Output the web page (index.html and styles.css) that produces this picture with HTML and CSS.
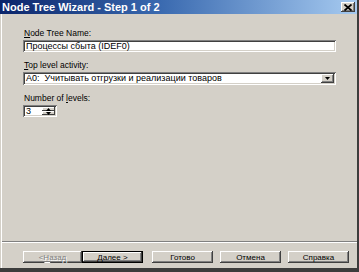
FILE: index.html
```html
<!DOCTYPE html>
<html>
<head>
<meta charset="utf-8">
<link rel="stylesheet" href="styles.css">
</head>
<body>
<div class="window">
  <div class="titlebar">
    <span class="title">Node Tree Wizard - Step 1 of 2</span>
    <span class="close"><svg width="8" height="7" viewBox="0 0 8 7"><path d="M0.5 0.5 L7.5 6.5 M7.5 0.5 L0.5 6.5" stroke="#000" stroke-width="1.8" fill="none"/></svg></span>
  </div>
  <div class="frame">
    <div class="content">
      <div class="form">
        <label class="label label-first"><u>N</u>ode Tree Name:</label>
        <div class="field input">Процессы сбыта (IDEF0)</div>
        <label class="label"><u>T</u>op level activity:</label>
        <div class="field select">
          <span class="select-text">A0:&nbsp; Учитывать отгрузки и реализации товаров</span>
          <span class="dropbtn"><svg width="5" height="3" viewBox="0 0 5 3"><path d="M0 0 H5 L2.5 3 Z" fill="#000"/></svg></span>
        </div>
        <label class="label">Number of <u>l</u>evels:</label>
        <div class="field spin">
          <span class="spin-text">3</span>
          <span class="spin-btns">
            <span class="spin-btn"><svg width="5" height="3" viewBox="0 0 5 3"><path d="M0 3 H5 L2.5 0 Z" fill="#000"/></svg></span>
            <span class="spin-btn"><svg width="5" height="3" viewBox="0 0 5 3"><path d="M0 0 H5 L2.5 3 Z" fill="#000"/></svg></span>
          </span>
        </div>
      </div>
      <div class="separator"></div>
      <div class="buttons">
        <div class="btn-pair">
          <span class="btn btn-back disabled">&lt; <u>Н</u>азад</span>
          <span class="btn btn-next default"><u>Д</u>алее &gt;</span>
        </div>
        <span class="btn">Готово</span>
        <span class="btn">Отмена</span>
        <span class="btn">Справка</span>
      </div>
    </div>
  </div>
</div>
</body>
</html>
```

FILE: styles.css
```css
html, body {
  margin: 0;
  padding: 0;
  background: #3c3c3c;
}
body {
  width: 359px;
  height: 272px;
  overflow: hidden;
  font-family: "Liberation Sans", Arial, sans-serif;
  font-size: 8.5px;
  color: #000;
}
.window {
  width: 357px;
  height: 268px;
  display: flex;
  flex-direction: column;
  background: #d4d0c8;
}
.titlebar {
  height: 14px;
  flex: none;
  display: flex;
  align-items: center;
  justify-content: space-between;
  background: linear-gradient(to right, #0a246a 0%, #3a6ab0 45%, #a6caf0 100%);
  padding: 0 2px 0 2px;
}
.title {
  color: #fff;
  font-weight: bold;
  font-size: 11px;
  line-height: 14px;
  white-space: nowrap;
}
.close {
  width: 14px;
  height: 10px;
  background: #d4d0c8;
  box-shadow: inset -1px -1px #404040, inset 1px 1px #fff, inset -2px -2px #808080;
  display: flex;
  align-items: center;
  justify-content: center;
}
.close svg { display: block; }
.frame {
  flex: 1;
  display: flex;
  box-shadow: inset 1px 0 #d4d0c8, inset 2px 0 #fff;
}
.content {
  flex: 1;
  display: flex;
  flex-direction: column;
}
.form {
  flex: 1;
  display: flex;
  flex-direction: column;
  align-items: flex-start;
  padding-left: 23px;
  padding-top: 14px;
}
.label {
  display: block;
  line-height: 10px;
  height: 10px;
  margin-top: 8px;
  margin-bottom: 2px;
  margin-left: 1px;
  white-space: nowrap;
}
.label-first {
  margin-top: 0;
}
.field {
  background: #fff;
  box-shadow: inset 1px 1px #808080, inset -1px -1px #fff, inset 2px 2px #404040, inset -2px -2px #d4d0c8;
  box-sizing: border-box;
  white-space: nowrap;
  font-size: 9px;
}
.input {
  width: 313px;
  height: 12px;
  line-height: 12px;
  padding-left: 3px;
}
.select {
  width: 313px;
  height: 13px;
  display: flex;
  align-items: center;
  justify-content: space-between;
  padding: 2px 2px 2px 3px;
}
.select-text {
  line-height: 9px;
}
.dropbtn {
  width: 13px;
  height: 9px;
  background: #d4d0c8;
  box-shadow: inset -1px -1px #404040, inset 1px 1px #fff, inset -2px -2px #808080;
  display: flex;
  align-items: center;
  justify-content: center;
}
.dropbtn svg, .spin-btn svg { display: block; }
.spin {
  width: 34px;
  height: 12px;
  display: flex;
  align-items: center;
  justify-content: space-between;
  padding: 2px 2px 2px 3px;
}
.spin-text {
  line-height: 8px;
}
.spin-btns {
  display: flex;
  flex-direction: column;
  width: 13px;
  height: 8px;
}
.spin-btn {
  flex: 1;
  background: #d4d0c8;
  box-shadow: inset -1px -1px #404040, inset 1px 1px #fff;
  display: flex;
  align-items: center;
  justify-content: center;
}
.separator {
  height: 1px;
  margin-left: 2px;
  background: #808080;
  border-bottom: 1px solid #fff;
}
.buttons {
  display: flex;
  align-items: center;
  gap: 7px;
  padding: 8px 0 5px 23px;
}
.btn-pair {
  display: flex;
  margin-right: 2px;
}
.btn {
  width: 61px;
  height: 12px;
  box-sizing: border-box;
  display: flex;
  align-items: center;
  justify-content: center;
  background: #d4d0c8;
  box-shadow: inset -1px -1px #404040, inset 1px 1px #fff, inset -2px -2px #808080;
  font-size: 8px;
  white-space: nowrap;
}
.btn-back {
  width: 59px;
}
.disabled {
  color: #808080;
  text-shadow: 1px 1px #fff;
}
.default {
  border: 1px solid #000;
}
```
